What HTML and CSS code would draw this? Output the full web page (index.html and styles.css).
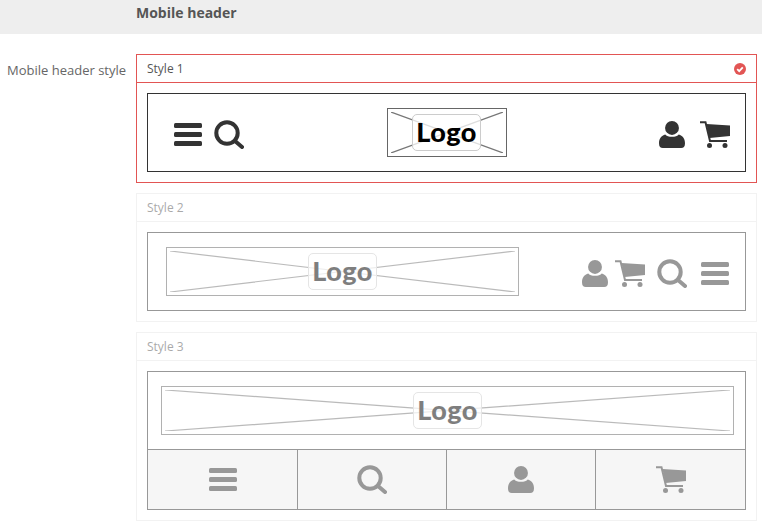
FILE: index.html
```html
<!DOCTYPE html>
<html lang="en">
  <head>
    <meta charset="UTF-8" />
    <meta name="viewport" content="width=device-width, initial-scale=1.0" />
    <title>Mobile header</title>
    <link rel="stylesheet" href="styles.css">
  </head>
  <body>
    <svg class="sprites" aria-hidden="true">
      <symbol id="i-menu" viewBox="0 0 28 23">
        <rect y="0" width="28" height="5" rx="1.5" />
        <rect y="9" width="28" height="5" rx="1.5" />
        <rect y="18" width="28" height="5" rx="1.5" />
      </symbol>
      <symbol id="i-search" viewBox="0 0 30 29">
        <circle cx="13" cy="13" r="10.7" fill="none" stroke="currentColor" stroke-width="4" />
        <path d="M21 21l7 6" fill="none" stroke="currentColor" stroke-width="4" stroke-linecap="round" />
      </symbol>
      <symbol id="i-user" viewBox="0 0 27 28">
        <circle cx="13.5" cy="7.2" r="7.2" />
        <path d="M0 23C0 18 2.500 15.500 6.500 14 8.500 17.200 18.500 17.200 20.500 14 24.500 15.500 27 18 27 23 27 26.500 25.500 28 23 28H4C1.500 28 0 26.500 0 23Z" />
      </symbol>
      <symbol id="i-cart" viewBox="0 0 30 27">
        <path d="M0 1.200H5.500L10 20H27" fill="none" stroke="currentColor" stroke-width="2" />
        <path d="M6.500 3L30 4.500V15L9.500 17Z" />
        <circle cx="9.500" cy="24.500" r="2.500" />
        <circle cx="25" cy="24.500" r="2.500" />
      </symbol>
    </svg>

    <header class="section-head">
      <h2>Mobile header</h2>
    </header>

    <section class="option-row">
      <label class="option-label">Mobile header style</label>
      <div class="style-list">

        <article class="style-card selected">
          <div class="style-title">
            <span>Style 1</span>
            <svg class="check" viewBox="0 0 12 12">
              <circle cx="6" cy="6" r="6" fill="#e25554" />
              <path d="M3.200 6.200l2 2 3.600-3.800" fill="none" stroke="#fff" stroke-width="1.800" />
            </svg>
          </div>
          <div class="style-body">
            <div class="preview preview-one">
              <div class="icons icons-left">
                <svg class="icon icon-menu"><use href="#i-menu" /></svg>
                <svg class="icon icon-search"><use href="#i-search" /></svg>
              </div>
              <div class="logo logo-small">
                <svg class="logo-x" viewBox="0 0 100 100" preserveAspectRatio="none">
                  <path d="M0 0L100 100M100 0L0 100" />
                </svg>
                <span class="logo-text">Logo</span>
              </div>
              <div class="icons icons-right">
                <svg class="icon icon-user"><use href="#i-user" /></svg>
                <svg class="icon icon-cart"><use href="#i-cart" /></svg>
              </div>
            </div>
          </div>
        </article>

        <article class="style-card">
          <div class="style-title"><span>Style 2</span></div>
          <div class="style-body">
            <div class="preview preview-two">
              <div class="logo logo-wide">
                <svg class="logo-x" viewBox="0 0 100 100" preserveAspectRatio="none">
                  <path d="M0 0L100 100M100 0L0 100" />
                </svg>
                <span class="logo-text">Logo</span>
              </div>
              <div class="icons icons-two">
                <svg class="icon icon-user"><use href="#i-user" /></svg>
                <svg class="icon icon-cart"><use href="#i-cart" /></svg>
                <svg class="icon icon-search"><use href="#i-search" /></svg>
                <svg class="icon icon-menu"><use href="#i-menu" /></svg>
              </div>
            </div>
          </div>
        </article>

        <article class="style-card">
          <div class="style-title"><span>Style 3</span></div>
          <div class="style-body">
            <div class="preview preview-three">
              <div class="logo-row">
                <div class="logo">
                  <svg class="logo-x" viewBox="0 0 100 100" preserveAspectRatio="none">
                    <path d="M0 0L100 100M100 0L0 100" />
                  </svg>
                  <span class="logo-text">Logo</span>
                </div>
              </div>
              <div class="icon-bar">
                <div class="icon-cell"><svg class="icon icon-menu"><use href="#i-menu" /></svg></div>
                <div class="icon-cell"><svg class="icon icon-search"><use href="#i-search" /></svg></div>
                <div class="icon-cell"><svg class="icon icon-user"><use href="#i-user" /></svg></div>
                <div class="icon-cell"><svg class="icon icon-cart"><use href="#i-cart" /></svg></div>
              </div>
            </div>
          </div>
        </article>

      </div>
    </section>
  </body>
</html>
```

FILE: styles.css
```css
* {
  box-sizing: border-box;
}
body {
  margin: 0;
  background-color: white;
  color: #555;
  font-family: "Open Sans", "Liberation Sans", sans-serif;
  font-size: 13px;
}
.sprites {
  display: none;
}

.section-head {
  height: 34px;
  padding: 4px 0 0 136px;
  background-color: #eee;
}
.section-head h2 {
  margin: 0;
  font-size: 14px;
  line-height: 18px;
  font-weight: 700;
}

.option-row {
  display: grid;
  grid-template-columns: 136px 621px;
  margin-top: 20px;
}
.option-label {
  padding: 7px 0 0 7px;
  line-height: 18px;
  color: #666;
}
.style-list {
  display: flex;
  flex-direction: column;
  gap: 10px;
}

/* the cards that are not selected are the same card, just faded */
.style-card {
  border: 1px solid #e6e6e6;
  opacity: 0.5;
}
.style-card.selected {
  border-color: #e25554;
  opacity: 1;
}
.style-title {
  display: flex;
  justify-content: space-between;
  align-items: center;
  height: 28px;
  padding: 0 10px;
  border-bottom: 1px solid #e6e6e6;
  font-size: 12px;
}
.selected .style-title {
  border-bottom-color: #e25554;
}
.check {
  width: 12px;
  height: 12px;
}
.style-body {
  padding: 10px;
}

.preview {
  border: 1px solid #333;
  color: #333;
}
.preview-one {
  display: grid;
  grid-template-columns: 1fr auto 1fr;
  align-items: center;
  padding: 14px 15px;
}
.preview-two {
  display: flex;
  align-items: center;
  padding: 14px 16px 14px 18px;
}
.logo-row {
  padding: 14px 11px 14px 13px;
}

.logo {
  position: relative;
  display: flex;
  justify-content: center;
  align-items: center;
  height: 49px;
  border: 1px solid #666;
  background-color: white;
}
.logo-small {
  width: 120px;
}
.logo-wide {
  width: 353px;
}
.logo-x {
  position: absolute;
  top: 3px;
  left: 3px;
  width: calc(100% - 6px);
  height: calc(100% - 6px);
}
.logo-x path {
  fill: none;
  stroke: #777;
  stroke-width: 1.2;
  vector-effect: non-scaling-stroke;
}
.logo-text {
  position: relative;
  width: 69px;
  height: 37px;
  border: 1px solid #ccc;
  border-radius: 5px;
  background-color: rgba(255, 255, 255, 0.75);
  color: black;
  font-family: Lato, "Liberation Sans", sans-serif;
  font-size: 27px;
  font-weight: 900;
  letter-spacing: 0.5px;
  line-height: 34px;
  text-align: center;
}

.icons {
  display: flex;
  align-items: center;
  padding-top: 4px;
}
.icons-left {
  gap: 12px;
  padding-left: 11px;
}
.icons-right {
  justify-content: flex-end;
  gap: 15px;
}
.icons-two {
  margin-left: auto;
}
.icons-two .icon-user {
  margin-right: 7px;
}
.icons-two .icon-cart {
  margin-right: 12px;
}
.icons-two .icon-search {
  margin-right: 14px;
}

.icon {
  display: block;
  fill: currentColor;
}
.icon-menu {
  width: 28px;
  height: 23px;
}
.icon-search {
  width: 30px;
  height: 29px;
}
.icon-user {
  width: 26px;
  height: 27px;
}
.icon-cart {
  width: 30px;
  height: 27px;
}

.icon-bar {
  display: grid;
  grid-template-columns: repeat(3, 149px) 1fr;
  border-top: 1px solid #333;
  background-color: #eee;
}
.icon-cell {
  display: flex;
  justify-content: center;
  align-items: center;
  height: 59px;
  border-left: 1px solid #333;
}
.icon-cell:first-child {
  border-left: 0;
}
```
